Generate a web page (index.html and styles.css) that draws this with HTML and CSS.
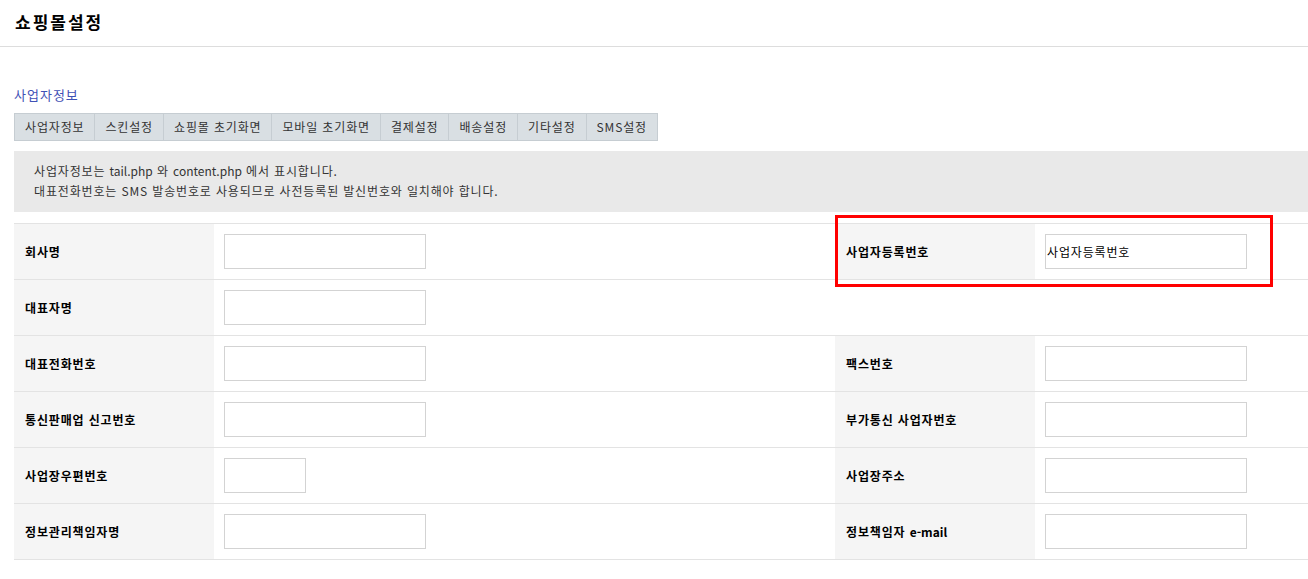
FILE: index.html
```html
<!DOCTYPE html>
<html lang="ko">
<head>
    <meta charset="UTF-8">
    <title>쇼핑몰설정</title>
    <link rel="stylesheet" href="styles.css">
</head>
<body>
    <h1 id="container_title">쇼핑몰설정</h1>
    <div id="container">
        <h2 class="h2_frm">사업자정보</h2>
        <ul class="anchor">
            <li>사업자정보</li>
            <li>스킨설정</li>
            <li>쇼핑몰 초기화면</li>
            <li>모바일 초기화면</li>
            <li>결제설정</li>
            <li>배송설정</li>
            <li>기타설정</li>
            <li>SMS설정</li>
        </ul>
        <div class="local_desc">
            <p>사업자정보는 <span class="en">tail.php</span> 와 <span class="en">content.php</span> 에서 표시합니다.</p>
            <p>대표전화번호는 SMS 발송번호로 사용되므로 사전등록된 발신번호와 일치해야 합니다.</p>
        </div>
        <div class="tbl_frm">
            <table>
                <colgroup>
                    <col class="col_th">
                    <col class="col_td1">
                    <col class="col_th">
                    <col>
                </colgroup>
                <tbody>
                    <tr>
                        <th>회사명</th>
                        <td><input type="text" class="frm_input"></td>
                        <th>사업자등록번호</th>
                        <td><input type="text" class="frm_input" value="사업자등록번호"></td>
                    </tr>
                    <tr>
                        <th>대표자명</th>
                        <td colspan="3"><input type="text" class="frm_input"></td>
                    </tr>
                    <tr>
                        <th>대표전화번호</th>
                        <td><input type="text" class="frm_input"></td>
                        <th>팩스번호</th>
                        <td><input type="text" class="frm_input"></td>
                    </tr>
                    <tr>
                        <th>통신판매업 신고번호</th>
                        <td><input type="text" class="frm_input"></td>
                        <th>부가통신 사업자번호</th>
                        <td><input type="text" class="frm_input"></td>
                    </tr>
                    <tr>
                        <th>사업장우편번호</th>
                        <td><input type="text" class="frm_input zip"></td>
                        <th>사업장주소</th>
                        <td><input type="text" class="frm_input"></td>
                    </tr>
                    <tr>
                        <th>정보관리책임자명</th>
                        <td><input type="text" class="frm_input"></td>
                        <th>정보책임자 <span class="en">e-mail</span></th>
                        <td><input type="text" class="frm_input"></td>
                    </tr>
                </tbody>
            </table>
            <div class="highlight"></div>
        </div>
    </div>
</body>
</html>
```

FILE: styles.css
```css
body, h1, h2, ul, li, p, table{
    margin:0;
    padding:0;
}
body{
    font-family:"Noto Sans CJK KR", "Liberation Sans", sans-serif;
    font-size:12px;
    letter-spacing:0.85px;
    color:#333;
    background:#fff;
}
.en{
    letter-spacing:0;
}
#container_title{
    height:46px;
    line-height:44px;
    padding-left:15px;
    font-size:17px;
    letter-spacing:2px;
    font-weight:bold;
    color:#000;
    border-bottom:1px solid #ddd;
}
#container{
    padding-left:14px;
}
.h2_frm{
    margin-top:38px;
    height:20px;
    line-height:20px;
    font-size:13px;
    letter-spacing:1px;
    font-weight:normal;
    color:#3f51b5;
}
.anchor{
    display:flex;
    margin-top:8px;
    list-style:none;
}
.anchor li{
    height:26px;
    line-height:26px;
    padding:0 10px;
    background:#d9dfe3;
    border:1px solid #c6cdd2;
    border-left:0;
    color:#333;
}
.anchor li:first-child{
    border-left:1px solid #c6cdd2;
}
.local_desc{
    margin-top:10px;
    padding:10px 20px;
    height:41px;
    background:#e9e9e9;
}
.local_desc p{
    height:20px;
    line-height:20px;
    color:#333;
}
.tbl_frm{
    position:relative;
    margin-top:11px;
}
.tbl_frm table{
    width:100%;
    border-collapse:collapse;
    table-layout:fixed;
    border-top:1px solid #e3e3e3;
}
.col_th{
    width:200px;
}
.col_td1{
    width:621px;
}
.tbl_frm th{
    height:55px;
    padding:0 11px;
    text-align:left;
    font-weight:bold;
    color:#000;
    background:#f5f5f5;
    border-bottom:1px solid #e3e3e3;
}
.tbl_frm td{
    height:55px;
    padding:0 10px;
    border-bottom:1px solid #e3e3e3;
}
.frm_input{
    display:block;
    box-sizing:border-box;
    width:202px;
    height:35px;
    padding:0 0 0 1px;
    border:1px solid #d3d3d3;
    font-family:"Noto Sans CJK KR", "Liberation Sans", sans-serif;
    font-size:12px;
    letter-spacing:0.85px;
    color:#000;
    outline:none;
}
.frm_input.zip{
    width:82px;
}
.highlight{
    position:absolute;
    top:-8px;
    left:821px;
    width:432px;
    height:66px;
    border:3px solid #f00;
}
```
